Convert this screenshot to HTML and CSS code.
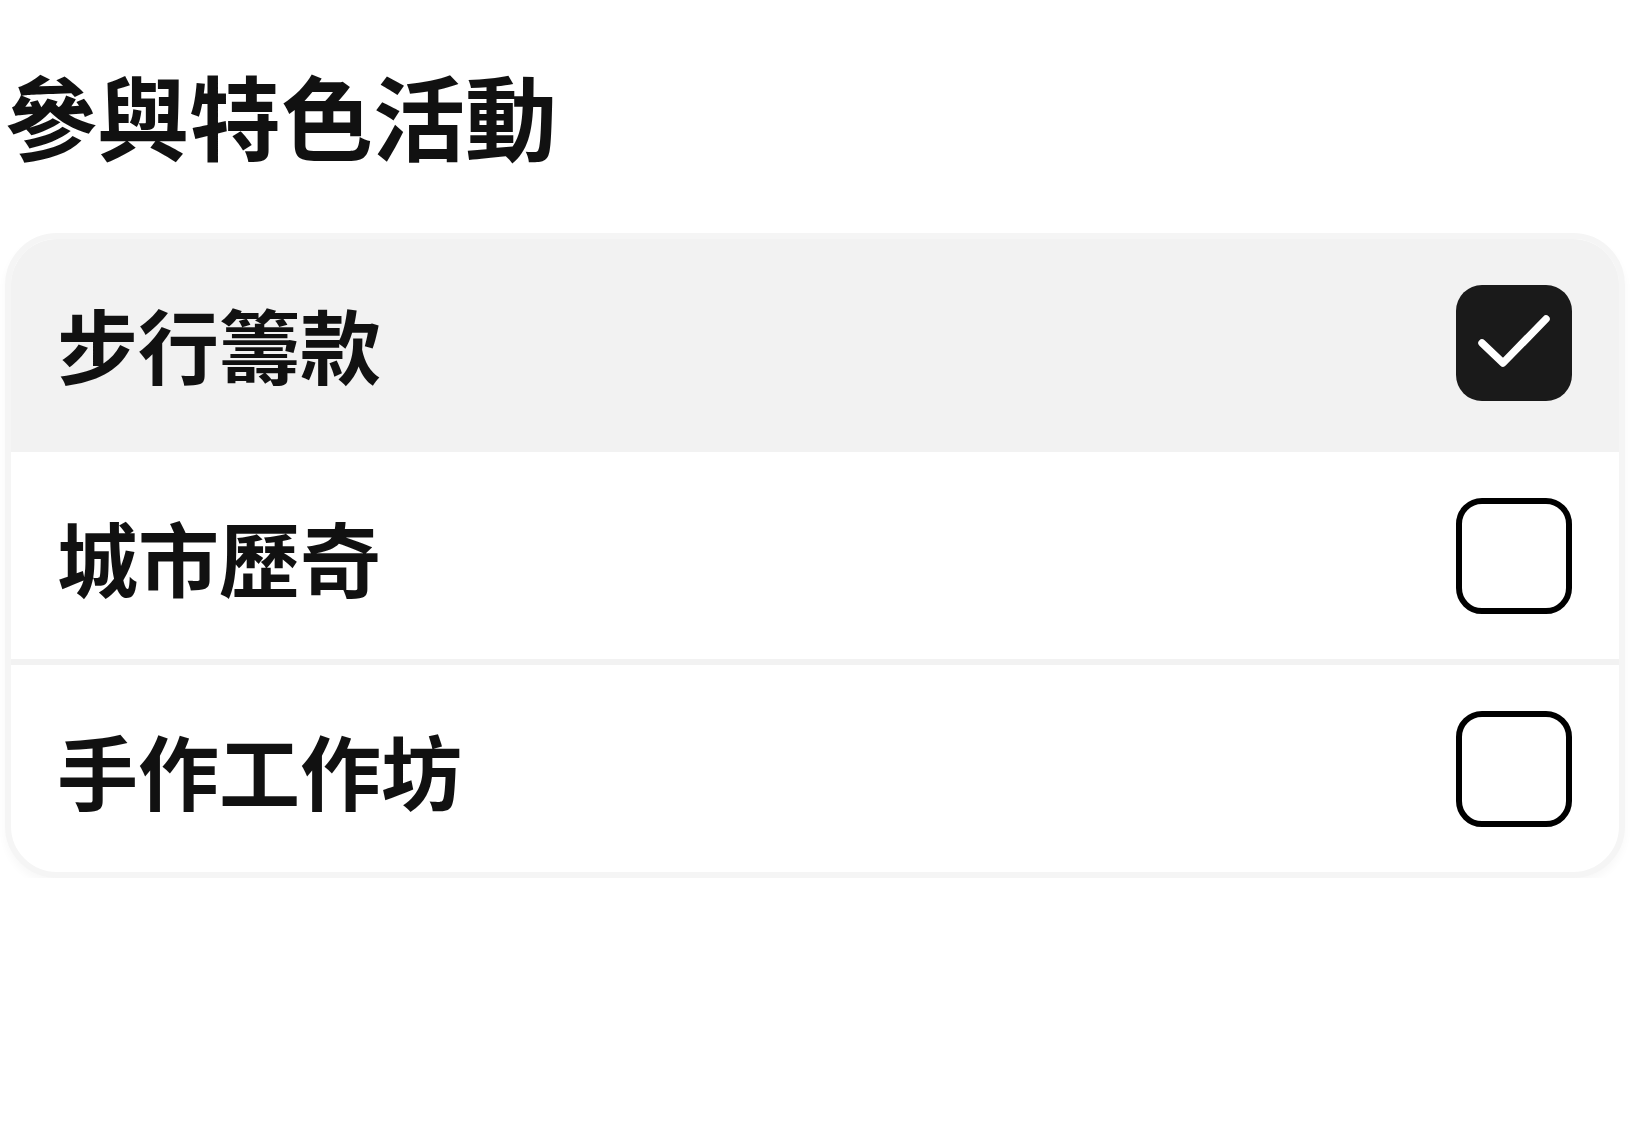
FILE: index.html
```html
<!DOCTYPE html>
<html lang="zh-Hant">
<head>
<meta charset="utf-8">
<title>參與特色活動</title>
<link rel="stylesheet" href="styles.css">
</head>
<body>
<main class="page">
  <h1 class="title">參與特色活動</h1>
  <ul class="card">
    <li class="row row-active">
      <span class="label">步行籌款</span>
      <span class="box box-checked">
        <svg viewBox="0 0 116 116" width="116" height="116" aria-hidden="true"><path d="M26 58 L47 78 L90 34" fill="none" stroke="#ffffff" stroke-width="7.5" stroke-linecap="round" stroke-linejoin="round"/></svg>
      </span>
    </li>
    <li class="row">
      <span class="label">城市歷奇</span>
      <span class="box"></span>
    </li>
    <li class="row">
      <span class="label">手作工作坊</span>
      <span class="box"></span>
    </li>
  </ul>
</main>
</body>
</html>
```

FILE: styles.css
```css
html, body {
  margin: 0;
  padding: 0;
  background: #ffffff;
}

body {
  font-family: "Noto Sans CJK TC", "Noto Sans CJK SC", "Noto Sans", sans-serif;
  color: #111111;
}

.page {
  padding: 68px 9px 0 5px;
}

.title {
  margin: 0 0 73px 0;
  font-size: 92px;
  line-height: 92px;
  font-weight: 700;
  letter-spacing: 0;
}

.card {
  list-style: none;
  margin: 0;
  padding: 0;
  border: 6px solid #f5f5f5;
  border-radius: 52px;
  overflow: hidden;
  background: #ffffff;
  box-shadow: 0 5px 9px rgba(0, 0, 0, 0.03);
}

.row {
  height: 207px;
  display: flex;
  align-items: center;
  justify-content: space-between;
  padding: 0 47px 0 46px;
  border-top: 6px solid #f2f2f2;
}

.row:first-child {
  border-top: 0;
}

.row-active {
  background: #f2f2f2;
}

.label {
  font-size: 81px;
  line-height: 1;
  font-weight: 700;
}

.box {
  width: 104px;
  height: 104px;
  border: 6px solid #000000;
  border-radius: 26px;
  background: #ffffff;
  flex: none;
  display: flex;
  align-items: center;
  justify-content: center;
  overflow: hidden;
}

.box-checked {
  width: 116px;
  height: 116px;
  border: 0;
  background: #1a1a1a;
}

.box-checked svg {
  display: block;
}
```
